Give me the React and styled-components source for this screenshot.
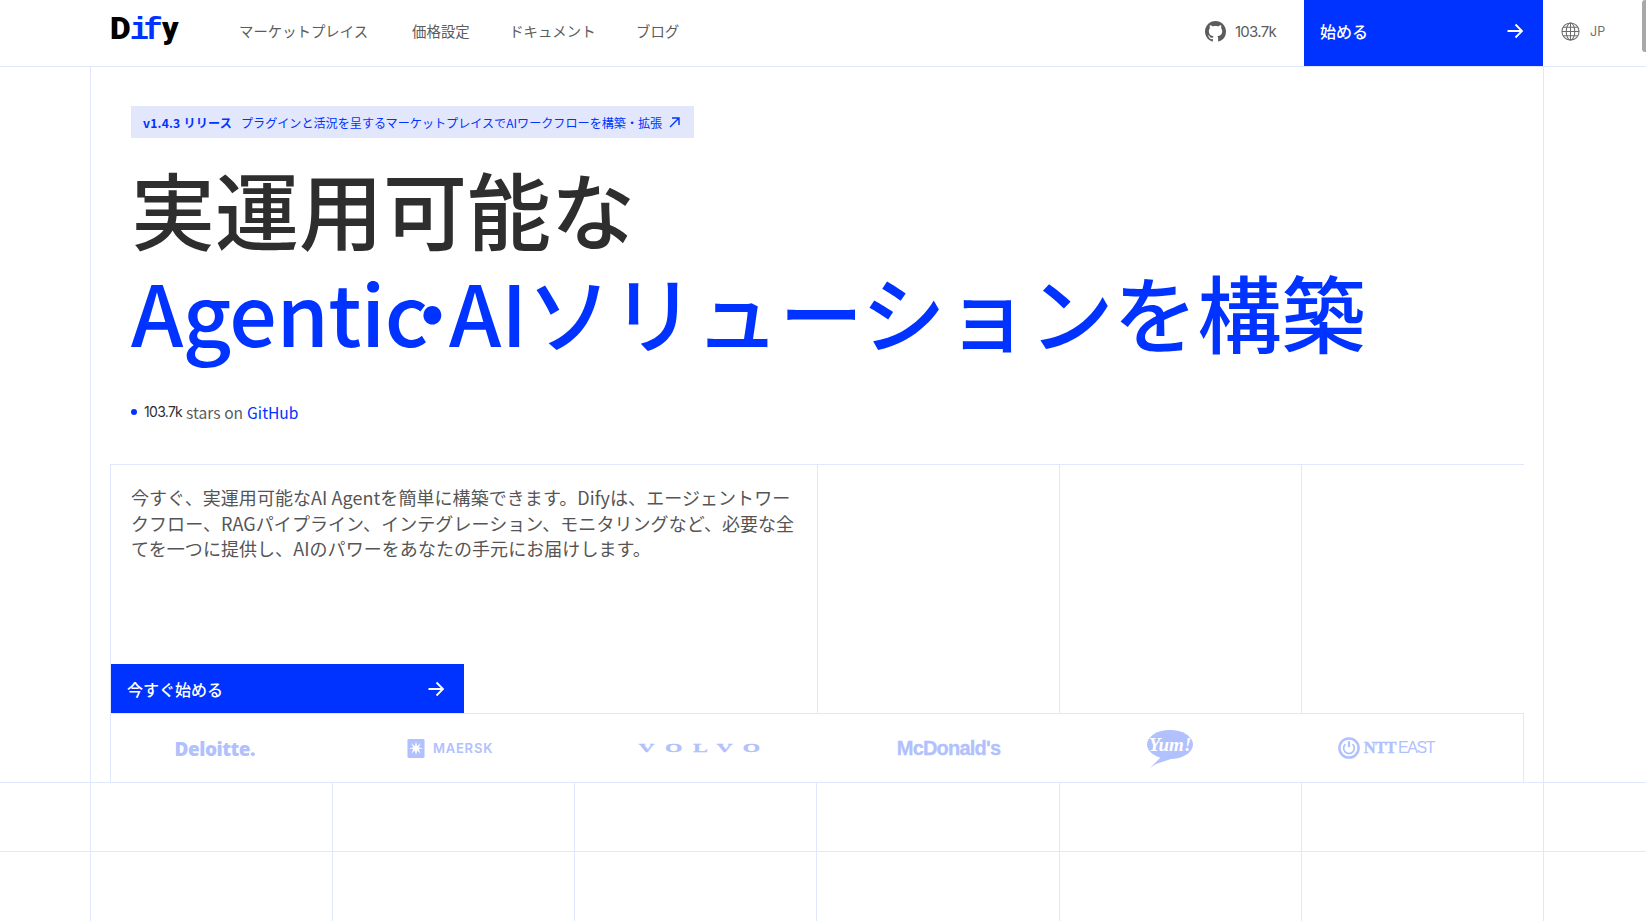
import React from 'react'
import styled, { createGlobalStyle } from 'styled-components'

const BLUE = '#0033ff'
const LINE = '#e2e8fb'
const LOGO = '#b0c1fd'
const JP = '"Noto Sans CJK JP", "Noto Sans", sans-serif'

const GlobalStyle = createGlobalStyle`
  html, body { margin: 0; padding: 0; background: #fff; overflow: hidden; }
  body { font-family: ${JP}; }
  * { box-sizing: border-box; }
`

const Arrow = ({ size = 20 }) => (
  <svg width={size} height={size} viewBox="0 0 20 20" fill="none" stroke="#fff" strokeWidth="1.8">
    <path d="M2.5 10h14.5M10.5 3.5 17 10l-6.5 6.5" />
  </svg>
)

const GithubIcon = () => (
  <svg width="21" height="21" viewBox="0 0 16 16" fill="#5c5c5c">
    <path d="M8 0C3.58 0 0 3.58 0 8c0 3.54 2.29 6.53 5.47 7.59.4.07.55-.17.55-.38 0-.19-.01-.82-.01-1.49-2.01.37-2.53-.49-2.69-.94-.09-.23-.48-.94-.82-1.13-.28-.15-.68-.52-.01-.53.63-.01 1.08.58 1.23.82.72 1.21 1.87.87 2.33.66.07-.52.28-.87.51-1.07-1.78-.2-3.64-.89-3.64-3.95 0-.87.31-1.59.82-2.15-.08-.2-.36-1.02.08-2.12 0 0 .67-.21 2.2.82.64-.18 1.32-.27 2-.27s1.36.09 2 .27c1.53-1.04 2.2-.82 2.2-.82.44 1.1.16 1.92.08 2.12.51.56.82 1.27.82 2.15 0 3.07-1.87 3.75-3.65 3.95.29.25.54.73.54 1.48 0 1.07-.01 1.93-.01 2.2 0 .21.15.46.55.38A8.01 8.01 0 0 0 16 8c0-4.42-3.58-8-8-8z" />
  </svg>
)

const GlobeIcon = () => (
  <svg width="19" height="19" viewBox="0 0 20 20" fill="none" stroke="#6b6b6b" strokeWidth="1.1">
    <circle cx="10" cy="10" r="9" />
    <ellipse cx="10" cy="10" rx="4.5" ry="9" />
    <path d="M10 1v18M1 10h18M2.2 5.6h15.6M2.2 14.4h15.6" />
  </svg>
)

const Page = styled.div`
  position: relative;
  width: 1646px;
  height: 921px;
  overflow: hidden;
  background: #fff;
`

const ScrollThumb = styled.div`
  position: absolute;
  top: 0;
  right: 0;
  width: 4px;
  height: 52px;
  background: #a8a8a8;
  border-radius: 3px 0 0 3px;
`

const Header = styled.header`
  display: flex;
  align-items: stretch;
  height: 67px;
  padding-left: 110px;
  border-bottom: 1px solid ${LINE};
`

const Logo = styled.div`
  width: 129px;
  font-family: Roboto, sans-serif;
  font-size: 32px;
  font-weight: 900;
  line-height: 57px;
  color: #000;
  span { color: ${BLUE}; font-family: "Liberation Mono", monospace; font-weight: 700; font-size: 32px; letter-spacing: -5.5px; margin: 0 5px 0 -1px; }
`

const Nav = styled.nav`
  display: flex;
  align-items: center;
  flex: 1;
  padding-bottom: 5px;
`

const NavLink = styled.a`
  font-size: 14.4px;
  color: #5c5c5c;
  margin-right: ${p => p.$gap}px;
`

const Stars = styled.a`
  display: flex;
  align-items: center;
  gap: 9px;
  margin-right: 28px;
  font-family: Inter, sans-serif;
  font-size: 15px;
  letter-spacing: -0.7px;
  color: #5c5c5c;
  padding-bottom: 4px;
`

const HeaderButton = styled.a`
  display: flex;
  align-items: center;
  justify-content: space-between;
  width: 239px;
  height: 66px;
  padding: 0 18px 5px 16px;
  background: ${BLUE};
  color: #fff;
  font-size: 16px;
  font-weight: 500;
`

const Lang = styled.a`
  display: flex;
  align-items: center;
  gap: 10px;
  width: 103px;
  padding: 0 0 4px 18px;
  font-family: Inter, sans-serif;
  font-size: 12.5px;
  color: #707070;
`

const Frame = styled.div`
  margin: 0 102px 0 90px;
  height: 715px;
  border-left: 1px solid ${LINE};
  border-right: 1px solid ${LINE};
  padding: 39px 19px 0 40px;
`

const Badge = styled.a`
  display: inline-flex;
  align-items: center;
  height: 32px;
  padding: 0 14px 0 12px;
  background: #e2e7fc;
  color: ${BLUE};
  font-size: 12.1px;
  white-space: nowrap;
  b { font-weight: 700; letter-spacing: 0.2px; margin-right: 9px; }
  svg { margin-left: 7px; }
`

const Title = styled.h1`
  margin: 18px 0 0;
  font-size: 84px;
  line-height: 103px;
  font-weight: 500;
  color: #2e2e2e;
  white-space: nowrap;
`

const TitleBlue = styled.span`
  display: block;
  color: ${BLUE};
`

const TitleLatin = styled.span`
  letter-spacing: -0.5px;
`

const TitleDot = styled.span`
  font-weight: 900;
  letter-spacing: -9px;
  margin-left: -21px;
`

const StarLine = styled.p`
  display: flex;
  align-items: center;
  margin: 39px 0 0;
  font-size: 15.6px;
  line-height: 22px;
  color: #5c5c5c;
  em { font-style: normal; font-family: Inter, sans-serif; font-size: 14px; letter-spacing: -0.7px; color: #2e2e2e; margin-right: 4px; }
  a { color: ${BLUE}; margin-left: 4px; }
  i { width: 6px; height: 6px; border-radius: 50%; background: ${BLUE}; margin-right: 7px; }
`

const Panel = styled.section`
  display: grid;
  grid-template-columns: 706px 242px 242px 1fr;
  height: 250px;
  margin: 41px 0 0 -21px;
  border-top: 1px solid ${LINE};
  border-bottom: 1px solid ${LINE};
  border-left: 1px solid ${LINE};
`

const Cell = styled.div`
  border-left: ${p => (p.$first ? 'none' : `1px solid ${LINE}`)};
`

const Intro = styled.div`
  display: flex;
  flex-direction: column;
  justify-content: space-between;
  height: 100%;
`

const Lead = styled.p`
  margin: 20px 20px 0;
  font-size: 18px;
  line-height: 25.6px;
  letter-spacing: 0.06px;
  color: #555;
`

const StartButton = styled.a`
  display: flex;
  align-items: center;
  justify-content: space-between;
  width: 353px;
  height: 49px;
  padding: 0 18px 0 16px;
  background: ${BLUE};
  color: #fff;
  font-size: 16px;
  font-weight: 500;
`

const LogoRow = styled.div`
  display: grid;
  grid-template-columns: 207.5px 263px 233px 268px 175px 257px;
  align-items: center;
  height: 68px;
  margin-left: -21px;
  border-left: 1px solid ${LINE};
  border-right: 1px solid ${LINE};
  color: ${LOGO};
`

const LogoItem = styled.div`
  display: flex;
  align-items: center;
  justify-content: center;
  gap: ${p => p.$gap || 0}px;
`

const Deloitte = styled.span`
  font-family: "Open Sans", sans-serif;
  font-size: 19px;
  font-weight: 800;
  letter-spacing: -0.5px;
  padding-top: 1px;
`

const Maersk = styled.span`
  font-family: Inter, sans-serif;
  font-size: 13px;
  font-weight: 600;
  letter-spacing: 0.8px;
`

const Volvo = styled.span`
  display: inline-block;
  font-family: "Liberation Serif", serif;
  font-size: 13.5px;
  font-weight: 700;
  letter-spacing: 6.5px;
  padding-left: 6.5px;
  margin-left: 3px;
  transform: scaleX(1.65);
  -webkit-text-stroke: 0.3px ${LOGO};
`

const McDonalds = styled.span`
  font-family: "Liberation Sans", sans-serif;
  font-size: 20px;
  font-weight: 700;
  letter-spacing: -0.8px;
  -webkit-text-stroke: 0.3px ${LOGO};
`

const Ntt = styled.span`
  font-family: "Liberation Serif", serif;
  font-size: 16.5px;
  font-weight: 700;
  letter-spacing: -0.6px;
  -webkit-text-stroke: 0.3px ${LOGO};
  small { font-family: "Liberation Sans", sans-serif; font-size: 16px; font-weight: 400; letter-spacing: -1.4px; margin-left: 2px; -webkit-text-stroke: 0; }
`

const YumWrap = styled.div`
  display: flex;
  margin-top: 2px;
`

const BottomGrid = styled.div`
  border-top: 1px solid ${LINE};
  display: grid;
  grid-template-columns: 91px repeat(6, 242.17px) 1fr;
  grid-auto-rows: 69px;
`

const GridCell = styled.div`
  border-bottom: ${p => (p.$lastRow ? 'none' : `1px solid ${LINE}`)};
  border-right: ${p => (p.$last ? 'none' : `1px solid ${LINE}`)};
`

const MaerskStar = () => (
  <svg width="18" height="19" viewBox="0 0 18 20">
    <rect width="18" height="20" rx="1.5" fill={LOGO} />
    <path fill="#fff" d="M9 2.5l1.2 5 3.8-3.2-2.2 4.6 4.7.9-4.7 1.1 2.2 4.5-3.8-3.2-1.2 5-1.2-5-3.8 3.2 2.2-4.5-4.7-1.1 4.7-.9-2.2-4.6 3.8 3.2z" />
  </svg>
)

const YumBubble = () => (
  <svg width="46" height="38" viewBox="0 0 46 38">
    <ellipse cx="23" cy="14.5" rx="23" ry="14.5" fill={LOGO} />
    <path d="M15 26 3 38l6-4 15-5z" fill={LOGO} />
    <text x="23" y="21" textAnchor="middle" fontFamily="Liberation Serif, serif" fontSize="19" fontStyle="italic" fontWeight="700" fill="#fff">Yum!</text>
  </svg>
)

const PowerIcon = () => (
  <svg width="22" height="22" viewBox="0 0 23 23" fill="none" stroke={LOGO}>
    <circle cx="11.5" cy="11.5" r="10" strokeWidth="2.6" />
    <path d="M11.5 4.5v6" strokeWidth="2.4" />
    <path d="M7.8 7.5a5.6 5.6 0 1 0 7.4 0" strokeWidth="1.8" />
  </svg>
)

const App = () => (
  <Page>
    <GlobalStyle />
    <ScrollThumb />
    <Header>
      <Logo>D<span>if</span>y</Logo>
      <Nav>
        <NavLink $gap={44}>マーケットプレイス</NavLink>
        <NavLink $gap={39.5}>価格設定</NavLink>
        <NavLink $gap={40.5}>ドキュメント</NavLink>
        <NavLink $gap={0}>ブログ</NavLink>
      </Nav>
      <Stars><GithubIcon />103.7k</Stars>
      <HeaderButton>始める<Arrow /></HeaderButton>
      <Lang><GlobeIcon />JP</Lang>
    </Header>
    <Frame>
      <Badge>
        <b>v1.4.3 リリース</b>
        プラグインと活況を呈するマーケットプレイスでAIワークフローを構築・拡張
        <svg width="11" height="11" viewBox="0 0 11 11" fill="none" stroke={BLUE} strokeWidth="1.4">
          <path d="M1 10 10 1M3 1h7v7" />
        </svg>
      </Badge>
      <Title>
        実運用可能な
        <TitleBlue><TitleLatin>Agentic</TitleLatin><TitleDot>·</TitleDot>AIソリューションを構築</TitleBlue>
      </Title>
      <StarLine><i /><em>103.7k</em> stars on <a>GitHub</a></StarLine>
      <Panel>
        <Cell $first>
          <Intro>
            <Lead>今すぐ、実運用可能なAI Agentを簡単に構築できます。Difyは、エージェントワークフロー、RAGパイプライン、インテグレーション、モニタリングなど、必要な全てを一つに提供し、AIのパワーをあなたの手元にお届けします。</Lead>
            <StartButton>今すぐ始める<Arrow /></StartButton>
          </Intro>
        </Cell>
        <Cell />
        <Cell />
        <Cell />
      </Panel>
      <LogoRow>
        <LogoItem><Deloitte>Deloitte.</Deloitte></LogoItem>
        <LogoItem $gap={8}><MaerskStar /><Maersk>MAERSK</Maersk></LogoItem>
        <LogoItem><Volvo>VOLVO</Volvo></LogoItem>
        <LogoItem><McDonalds>McDonald's</McDonalds></LogoItem>
        <LogoItem><YumWrap><YumBubble /></YumWrap></LogoItem>
        <LogoItem $gap={4}><PowerIcon /><Ntt>NTT<small>EAST</small></Ntt></LogoItem>
      </LogoRow>
    </Frame>
    <BottomGrid>
      {Array.from({ length: 16 }).map((_, i) => (
        <GridCell key={i} $last={i % 8 === 7} $lastRow={i >= 8} />
      ))}
    </BottomGrid>
  </Page>
)

export default App
